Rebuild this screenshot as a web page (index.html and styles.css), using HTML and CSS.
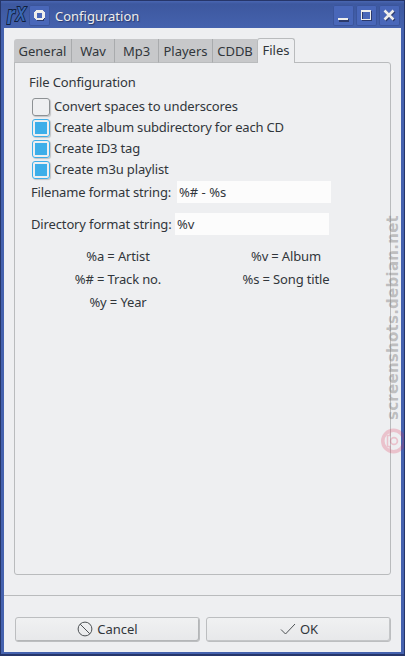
FILE: index.html
```html
<!DOCTYPE html>
<html lang="en">
<head>
    <meta charset="UTF-8">
    <meta name="viewport" content="width=device-width, initial-scale=1.0">
    <title>Configuration</title>
    <link rel="stylesheet" href="styles.css">
</head>
<body>
    <div class="window">
        <!-- Title bar -->
        <header class="titlebar">
            <span class="logo"><i class="logo-r">r</i><i class="logo-x">X</i></span>
            <button class="title-btn menu-btn">
                <svg width="21" height="21" viewBox="0 0 21 21" shape-rendering="crispEdges">
                    <path d="M8 7h7v1h1v6h-1v2H8v-1H7V8h1z" fill="#2b3a6c"/>
                    <path d="M8 7h5v6H8z" fill="#4967b9"/>
                    <path fill-rule="evenodd" d="M7 5h7v1h1v1h1v6h-1v1h-1v1H7v-1H6v-1H5V7h1V6h1zM8 8v5h5V8z" fill="#eeeeec"/>
                </svg>
            </button>
            <h1>Configuration</h1>
            <div class="controls">
                <button class="title-btn">
                    <svg width="21" height="21" viewBox="0 0 21 21" shape-rendering="crispEdges">
                        <path d="M6 14h10v3H6z" fill="#2b3a6c"/>
                        <path d="M5 13h10v2H5z" fill="#eeeeec"/>
                    </svg>
                </button>
                <button class="title-btn">
                    <svg width="21" height="21" viewBox="0 0 21 21" shape-rendering="crispEdges">
                        <path d="M6.500 6.500h9v9h-9z" fill="none" stroke="#2b3a6c"/>
                        <path fill-rule="evenodd" d="M5 5h10v10H5zM6 7v7h8V7z" fill="#eeeeec"/>
                    </svg>
                </button>
                <button class="title-btn">
                    <svg width="21" height="21" viewBox="0 0 21 21">
                        <path d="M6.500 6.500l9 9M15.500 6.500l-9 9" stroke="#2b3a6c" stroke-width="2.500"/>
                        <path d="M5.500 5.500l9 9M14.500 5.500l-9 9" stroke="#eeeeec" stroke-width="2.600"/>
                    </svg>
                </button>
            </div>
        </header>

        <main class="content">
            <!-- Tabs -->
            <nav class="tabs">
                <a class="tab tab-general">General</a>
                <a class="tab tab-wav">Wav</a>
                <a class="tab tab-mp3">Mp3</a>
                <a class="tab tab-players">Players</a>
                <a class="tab tab-cddb">CDDB</a>
                <a class="tab tab-files active">Files</a>
            </nav>

            <section class="panel">
                <h2>File Configuration</h2>
                <div class="check-row"><span class="checkbox"></span>Convert spaces to underscores</div>
                <div class="check-row album-row"><span class="checkbox checked"></span>Create album subdirectory for each CD</div>
                <div class="check-row"><span class="checkbox checked"></span>Create ID3 tag</div>
                <div class="check-row"><span class="checkbox checked"></span>Create m3u playlist</div>

                <div class="field-row filename-row">
                    <label class="filename-label" for="filename">Filename format string:</label>
                    <input id="filename" type="text" value="%# - %s">
                </div>
                <div class="field-row">
                    <label class="directory-label" for="directory">Directory format string:</label>
                    <input id="directory" type="text" value="%v">
                </div>

                <div class="legend">
                    <span>%a = Artist</span>
                    <span>%v = Album</span>
                    <span>%# = Track no.</span>
                    <span>%s = Song title</span>
                    <span>%y = Year</span>
                </div>
            </section>

            <!-- Dialog buttons -->
            <footer class="actions">
                <button class="btn btn-cancel">
                    <svg width="16" height="16" viewBox="0 0 16 16" fill="none" stroke="#4d5154">
                        <circle cx="8" cy="8" r="6.900"/>
                        <path d="M3.200 3.200l9.600 9.600"/>
                    </svg>
                    Cancel
                </button>
                <button class="btn btn-ok">
                    <svg width="16" height="16" viewBox="0 0 16 16" fill="none" stroke="#4d5154">
                        <path d="M1 8.500l4.500 4.500L15 3"/>
                    </svg>
                    OK
                </button>
            </footer>
        </main>

        <!-- Watermark over the right edge -->
        <div class="watermark">
            <span class="watermark-text">screenshots.debian.net</span>
            <svg width="25" height="26" viewBox="0 0 25 26" fill="none" stroke="#e0284c">
                <circle cx="12.500" cy="13" r="10.700" stroke-width="3.600"/>
                <path d="M9 4v3.500H6.500v11H9V22" stroke-width="1.500"/>
                <circle cx="13" cy="13" r="3.400" stroke-width="1.700"/>
            </svg>
        </div>
    </div>
</body>
</html>
```
FILE: styles.css
```css
:root {
    --frame: #4562ae;
    --frame-dark: #26366a;
    --background: #eeeff1;
    --border: #b9bbbd;
    --text: #31363b;
    --accent: #3daee9;
}

* {
    margin: 0;
    padding: 0;
    box-sizing: border-box;
}

body {
    font-family: "Noto Sans", sans-serif;
    font-size: 13px;
    line-height: 18px;
    color: var(--text);
    overflow: hidden;
}

button,
input {
    font: inherit;
    color: inherit;
}

.window {
    position: relative;
    width: 405px;
    height: 656px;
    padding: 0 3px 2px 3px;
    background: var(--frame);
    border: 1px solid var(--frame-dark);
    border-bottom-width: 2px;
    overflow: hidden;
}

/* Title bar */
.titlebar {
    display: flex;
    height: 27px;
    margin: 0 -3px;
    padding: 4px 4px 0 5px;
    background: linear-gradient(#4966b2 0, #3d589f 3px, #4562ae 100%);
}

.logo {
    display: flex;
    width: 22px;
    height: 22px;
    font-family: "Liberation Sans", sans-serif;
    font-weight: bold;
    color: #3867b4;
    -webkit-text-stroke: 2px #131f3c;
    paint-order: stroke fill;
}

.logo-r {
    width: 8px;
    font-size: 25px;
    line-height: 20px;
    transform: scaleX(0.8);
}

.logo-x {
    width: 14px;
    font-size: 21px;
    line-height: 17px;
    transform: scaleX(0.7);
}

.title-btn {
    width: 21px;
    height: 21px;
    background: #4967b9;
    border: none;
    border-radius: 2px;
    box-shadow: inset 0 0 0 1px #3b559c;
}

.title-btn svg {
    display: block;
}

.menu-btn {
    margin-left: 1px;
}

.titlebar h1 {
    margin: 2px 0 0 5px;
    font-size: 13px;
    font-weight: normal;
    color: #eeeeec;
    text-shadow: 1px 1px 1px #2b3a6c;
}

.controls {
    display: flex;
    gap: 2px;
    margin-left: auto;
}

/* Window contents */
.content {
    height: 624px;
    padding-top: 10px;
    background: var(--background);
}

.tabs {
    position: relative;
    z-index: 1;
    display: flex;
    align-items: flex-end;
    height: 25px;
    margin-left: 10px;
}

.tab {
    height: 24px;
    padding-top: 3px;
    text-align: center;
    background: #c7c8ca;
    border-right: 1px solid #a9abad;
    border-bottom: 1px solid var(--border);
}

.tab-general {
    width: 58px;
    border-top-left-radius: 3px;
}

.tab-wav {
    width: 43px;
}

.tab-mp3 {
    width: 44px;
}

.tab-players {
    width: 54px;
}

.tab-cddb {
    width: 44px;
    border-right: none;
}

.tab-files {
    width: 38px;
}

.tab.active {
    height: 25px;
    padding-top: 2px;
    background: var(--background);
    border: 1px solid var(--border);
    border-bottom: none;
    border-radius: 3px 3px 0 0;
}

.panel {
    height: 513px;
    margin: -1px 10px 0 10px;
    padding: 10px 14px 0 14px;
    border: 1px solid var(--border);
    border-radius: 0 3px 3px 3px;
    letter-spacing: -0.14px;
}

.panel h2 {
    height: 24px;
    font-size: 13px;
    font-weight: normal;
    letter-spacing: -0.1px;
}

.check-row {
    display: flex;
    align-items: flex-start;
    gap: 4px;
    height: 21px;
    padding-left: 3px;
}

.album-row {
    letter-spacing: -0.19px;
}

.checkbox {
    width: 18px;
    height: 18px;
    margin-top: 1px;
    border: 1px solid #8d9194;
    border-radius: 3px;
    box-shadow: 1px 1px 1px #c2c4c6;
}

.checked {
    padding: 2px;
    border-color: var(--accent);
}

.checked::before {
    content: "";
    display: block;
    height: 12px;
    background: var(--accent);
}

/* Text fields */
.field-row {
    display: flex;
    align-items: center;
    height: 22px;
    padding-left: 2px;
}

.filename-row {
    margin-bottom: 10px;
}

.filename-label {
    width: 146px;
}

.directory-label {
    width: 144px;
}

.field-row input {
    width: 154px;
    height: 22px;
    padding-left: 2px;
    background: #fcfcfc;
    border: none;
    outline: none;
}

.legend {
    display: grid;
    grid-template-columns: 168px 168px;
    grid-auto-rows: 23px;
    margin: 10px 0 0 5px;
    text-align: center;
    line-height: 23px;
}

/* Dialog buttons */
.actions {
    display: flex;
    gap: 6px;
    margin-top: 20px;
    padding: 21px 10px 0 11px;
    border-top: 1px solid var(--border);
}

.btn {
    display: flex;
    align-items: center;
    justify-content: center;
    gap: 4px;
    width: 185px;
    height: 25px;
    padding-bottom: 1px;
    background: linear-gradient(#f0f1f2, #e7e8ea);
    border: 1px solid #bcbec0;
    border-radius: 3px;
    box-shadow: inset -1px -1px 0 #b4b6b8;
}

.btn-ok {
    padding-left: 1px;
    box-shadow: inset -1px -1px 0 #c4c6c8;
}

/* Watermark */
.watermark {
    position: absolute;
    top: 214px;
    left: 379px;
    width: 26px;
    height: 239px;
    display: flex;
    flex-direction: column;
    align-items: center;
    justify-content: space-between;
}

.watermark-text {
    writing-mode: vertical-rl;
    transform: rotate(180deg);
    font-family: "DejaVu Sans", sans-serif;
    font-weight: bold;
    font-size: 15px;
    letter-spacing: 0.26px;
    color: rgba(120, 120, 120, 0.43);
}

.watermark svg {
    flex: none;
    opacity: 0.22;
}
```
